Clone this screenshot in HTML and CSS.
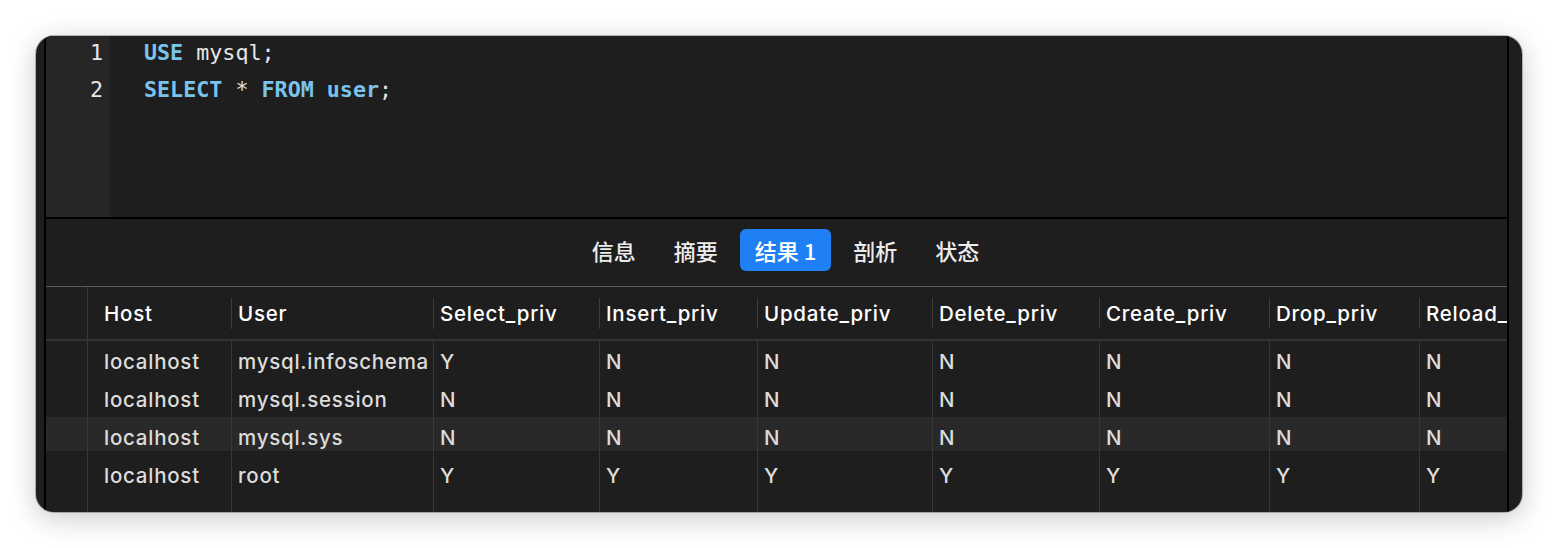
FILE: index.html
```html
<!DOCTYPE html>
<html lang="zh-CN">
<head>
<meta charset="utf-8">
<title>Query</title>
<link rel="stylesheet" href="styles.css">
</head>
<body>
<div class="window">
  <div class="main">
    <div class="editor">
      <div class="gutter">
        <div class="ln">1</div>
        <div class="ln">2</div>
      </div>
      <div class="code">
        <div class="line"><span class="kw">USE</span> mysql;</div>
        <div class="line"><span class="kw">SELECT</span> * <span class="kw">FROM</span> <span class="kw">user</span>;</div>
      </div>
    </div>
    <div class="split"></div>
    <div class="tabs">
      <div class="tab">信息</div>
      <div class="tab">摘要</div>
      <div class="tab active">结果 1</div>
      <div class="tab">剖析</div>
      <div class="tab">状态</div>
    </div>
    <div class="results">
      <div class="grid">
        <div class="th idx"></div>
        <div class="th first"><div class="hc">Host</div></div>
        <div class="th"><div class="hc">User</div></div>
        <div class="th"><div class="hc">Select_priv</div></div>
        <div class="th"><div class="hc">Insert_priv</div></div>
        <div class="th"><div class="hc">Update_priv</div></div>
        <div class="th"><div class="hc">Delete_priv</div></div>
        <div class="th"><div class="hc">Create_priv</div></div>
        <div class="th"><div class="hc">Drop_priv</div></div>
        <div class="th"><div class="hc">Reload_priv</div></div>

        <div class="td idx"></div>
        <div class="td first">localhost</div>
        <div class="td">mysql.infoschema</div>
        <div class="td">Y</div><div class="td">N</div><div class="td">N</div><div class="td">N</div><div class="td">N</div><div class="td">N</div><div class="td">N</div>

        <div class="td idx"></div>
        <div class="td first">localhost</div>
        <div class="td">mysql.session</div>
        <div class="td">N</div><div class="td">N</div><div class="td">N</div><div class="td">N</div><div class="td">N</div><div class="td">N</div><div class="td">N</div>

        <div class="td idx hl"></div>
        <div class="td first hl">localhost</div>
        <div class="td hl">mysql.sys</div>
        <div class="td hl">N</div><div class="td hl">N</div><div class="td hl">N</div><div class="td hl">N</div><div class="td hl">N</div><div class="td hl">N</div><div class="td hl">N</div>

        <div class="td idx"></div>
        <div class="td first">localhost</div>
        <div class="td">root</div>
        <div class="td">Y</div><div class="td">Y</div><div class="td">Y</div><div class="td">Y</div><div class="td">Y</div><div class="td">Y</div><div class="td">Y</div>

        <div class="td idx"></div><div class="td first"></div><div class="td"></div><div class="td"></div><div class="td"></div><div class="td"></div><div class="td"></div><div class="td"></div><div class="td"></div><div class="td"></div>
      </div>
    </div>
  </div>
</div>
</body>
</html>
```

FILE: styles.css
```css
* { box-sizing: border-box; }
html, body { margin: 0; padding: 0; }
body {
  background: #ffffff;
  padding: 36px;
  width: 1558px;
  height: 548px;
  overflow: hidden;
}
.window {
  width: 1486px;
  height: 476px;
  background: #1e1e1e;
  border-radius: 18px;
  overflow: hidden;
  display: flex;
  padding-left: 8px;
  padding-right: 13px;
  box-shadow: 0 0 0 1px rgba(0,0,0,0.25), 0 6px 28px rgba(0,0,0,0.22);
}
.main {
  flex: 1;
  min-width: 0;
  border-left: 2px solid #000;
  border-right: 2px solid #000;
  display: flex;
  flex-direction: column;
  overflow: hidden;
}
.editor {
  height: 181px;
  flex: none;
  display: flex;
  background: #1e1e1e;
  font-family: "DejaVu Sans Mono", "Liberation Mono", monospace;
  font-size: 21.7px;
  line-height: 37px;
  color: #e6e6e6;
}
.gutter {
  width: 64px;
  background: #262626;
  text-align: right;
  padding-right: 7px;
  color: #e8e8e8;
}
.gutter .ln, .code .line { position: relative; top: -2px; }
.code { padding-left: 34px; }
.code .line { white-space: pre; }
.kw { color: #7ac3ec; font-weight: bold; }
.split { height: 2px; background: #000; flex: none; }
.tabs {
  height: 68px;
  flex: none;
  border-bottom: 1px solid #5b5b5b;
  display: flex;
  justify-content: center;
  align-items: flex-start;
  padding-top: 10px;
  padding-left: 18px;
  gap: 6px;
}
.tab {
  height: 42px;
  line-height: 42px;
  padding: 0 16px;
  border-radius: 6px;
  font-family: "Noto Sans CJK SC", "Inter", sans-serif;
  font-size: 22px;
  font-weight: 500;
  color: #ececec;
}
.tab.active { background: #1f7ff5; color: #fff; padding: 0 15px; }
.results { flex: 1; overflow: hidden; }
.grid {
  display: grid;
  grid-template-columns: 42px 143px 202px 166px 158px 175px 167px 170px 150px 150px;
  grid-template-rows: 54px repeat(4, 38px) 1fr;
  height: 100%;
  width: 1523px;
  font-family: "Inter", "Noto Sans", sans-serif;
  font-size: 20.5px;
  letter-spacing: 0.75px;
  font-weight: 500;
}
.th {
  border-bottom: 2px solid #333333;
  padding: 11px 0 10px 0;
  color: #ffffff;
  white-space: nowrap;
  overflow: hidden;
}
.th .hc {
  height: 31px;
  line-height: 31px;
  border-left: 1px solid #3c3c3c;
  padding-left: 6px;
}
.th.first .hc { border-left: none; padding-left: 16px; }
.idx { border-right: 1px solid #383838; }
.td {
  padding-top: 3px;
  line-height: 35px;
  color: #dcdcdc;
  border-left: 1px solid #383838;
  padding-left: 6px;
  white-space: nowrap;
  overflow: hidden;
}
.td.first { border-left: none; padding-left: 16px; }
.td.idx { border-left: none; padding-left: 0; }
.td.hl { background: linear-gradient(#292929, #292929) top left / 100% 34px no-repeat; }
```
